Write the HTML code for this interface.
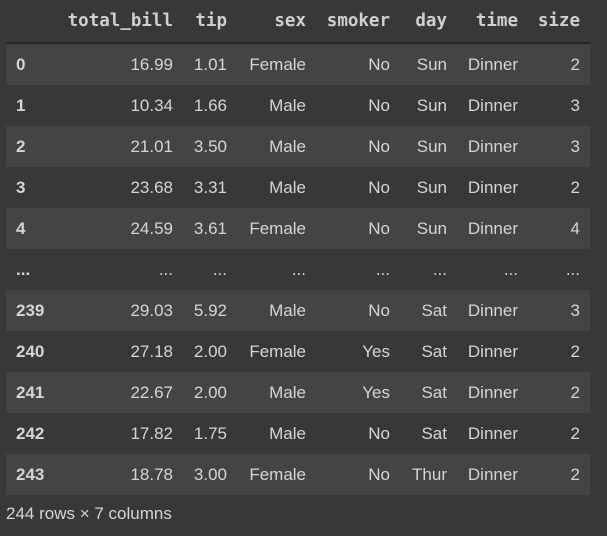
<!DOCTYPE html>
<html><head><style>
body{margin:0;width:607px;height:536px;background:#383838;position:relative;overflow:hidden;font-family:"Liberation Sans",Arial,sans-serif;color:#d5d5d5;font-size:17px}
.h{position:absolute;top:11px;font-family:"Liberation Mono","Courier New","DejaVu Sans Mono",monospace;font-weight:bold;font-size:17.5px;color:#d0d0d0}
.r{position:absolute;left:6px;width:584px;height:41px}
.s{background:#444444}
.c{position:absolute;top:11px;white-space:nowrap}
.i{left:10px;font-weight:bold}
.line{position:absolute;left:6px;top:42px;width:584px;height:2px;background:#262626}
.f{position:absolute;left:6px;top:504px;font-size:17px}
</style></head><body>
<div class="h" style="right:434px;font-family:monospace">total_bill</div>
<div class="h" style="right:380px;font-family:monospace">tip</div>
<div class="h" style="right:301px;font-family:monospace">sex</div>
<div class="h" style="right:217px;font-family:monospace">smoker</div>
<div class="h" style="right:160px;font-family:monospace">day</div>
<div class="h" style="right:89px;font-family:monospace">time</div>
<div class="h" style="right:27px;font-family:monospace">size</div>
<div class="line"></div>
<div id="t"></div>
<script>
var rows=[["0","16.99","1.01","Female","No","Sun","Dinner","2"],["1","10.34","1.66","Male","No","Sun","Dinner","3"],["2","21.01","3.50","Male","No","Sun","Dinner","3"],["3","23.68","3.31","Male","No","Sun","Dinner","2"],["4","24.59","3.61","Female","No","Sun","Dinner","4"],["...","...","...","...","...","...","...","..."],["239","29.03","5.92","Male","No","Sat","Dinner","3"],["240","27.18","2.00","Female","Yes","Sat","Dinner","2"],["241","22.67","2.00","Male","Yes","Sat","Dinner","2"],["242","17.82","1.75","Male","No","Sat","Dinner","2"],["243","18.78","3.00","Female","No","Thur","Dinner","2"]];
var rights=[167,221,300,384,441,512,574];
var h="";
rows.forEach(function(r,k){
h+='<div class="r'+(k%2==0?' s':'')+'" style="top:'+(44+41*k)+'px"><div class="c i">'+r[0]+'</div>';
for(var j=1;j<8;j++){h+='<div class="c" style="right:'+(584-rights[j-1])+'px">'+r[j]+'</div>';}
h+='</div>';});
document.getElementById('t').innerHTML=h;
</script>
<div class="f">244 rows × 7 columns</div>
</body></html>
